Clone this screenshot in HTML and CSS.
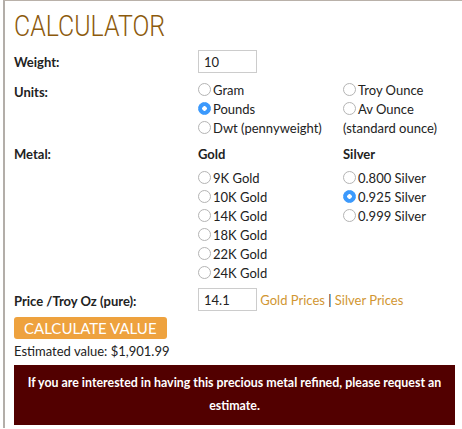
FILE: index.html
```html
<!DOCTYPE html>
<html lang="en">
<head>
    <meta charset="UTF-8">
    <title>Calculator</title>
    <link rel="stylesheet" href="styles.css">
</head>
<body>
    <div class="panel">
        <h1>CALCULATOR</h1>
        <form class="calc">
            <div class="label">Weight:</div>
            <div class="span2"><input type="text" class="num" value="10"></div>

            <div class="label">Units:</div>
            <div class="col">
                <label><input type="radio" name="unit">Gram</label>
                <label><input type="radio" name="unit" checked>Pounds</label>
                <label><input type="radio" name="unit">Dwt (pennyweight)</label>
            </div>
            <div class="col">
                <label><input type="radio" name="unit">Troy Ounce</label>
                <label><input type="radio" name="unit">Av Ounce</label>
                <span class="note">(standard ounce)</span>
            </div>

            <div class="label metal">Metal:</div>
            <div class="col metal">
                <div class="head">Gold</div>
                <label><input type="radio" name="metal">9K Gold</label>
                <label><input type="radio" name="metal">10K Gold</label>
                <label><input type="radio" name="metal">14K Gold</label>
                <label><input type="radio" name="metal">18K Gold</label>
                <label><input type="radio" name="metal">22K Gold</label>
                <label><input type="radio" name="metal">24K Gold</label>
            </div>
            <div class="col metal">
                <div class="head">Silver</div>
                <label><input type="radio" name="metal">0.800 Silver</label>
                <label><input type="radio" name="metal" checked>0.925 Silver</label>
                <label><input type="radio" name="metal">0.999 Silver</label>
            </div>

            <div class="label price">Price /Troy Oz (pure):</div>
            <div class="span2 price">
                <input type="text" class="num" value="14.1">
                <a href="#">Gold Prices</a> | <a href="#">Silver Prices</a>
            </div>
        </form>
        <button type="button" class="go">CALCULATE VALUE</button>
        <p class="result">Estimated value: $1,901.99</p>
        <div class="refine">If you are interested in having this precious metal refined, please request an estimate.</div>
    </div>
</body>
</html>
```

FILE: styles.css
```css
body {
    margin: 0;
    background: #fff;
    color: #222;
    font-family: 'Lato', sans-serif;
    font-size: 13px;
}
.panel {
    margin-left: 3px;
    border-top: 1px solid #b9b1a9;
    border-left: 2px solid #b3aea9;
    padding: 0 7px 3px 9px;
}
h1 {
    font-family: 'Roboto', sans-serif;
    font-weight: 300;
    font-size: 30px;
    color: #8c5a0c;
    margin: 0;
    padding-top: 9px;
    line-height: 32px;
    transform: scaleX(0.83);
    transform-origin: left center;
}
.calc {
    display: grid;
    grid-template-columns: 184px 145px 1fr;
    margin-top: 8px;
}
.label {
    font-weight: bold;
    padding-top: 4px;
}
.span2 {
    grid-column: span 2;
    margin-bottom: 7px;
}
.col {
    display: flex;
    flex-direction: column;
}
.col label, .note {
    display: flex;
    align-items: center;
    height: 19px;
}
input[type="radio"] {
    appearance: none;
    margin: 0 2px 0 0;
    width: 13px;
    height: 13px;
    border: 1px solid #b4b4b4;
    border-radius: 50%;
    background: #fff;
    flex: none;
}
input[type="radio"]:checked {
    border-color: #3b99fc;
    background: radial-gradient(circle, #fff 0 2px, #3b99fc 2.5px);
}
.metal {
    margin-top: 9px;
}
.label.metal {
    padding-top: 0;
}
.head {
    font-weight: bold;
    height: 22px;
}
.num {
    width: 47px;
    height: 15px;
    padding: 3px 5px;
    border: 1px solid #ccc;
    font-family: 'Lato', sans-serif;
    font-size: 13px;
    color: #222;
}
.price {
    margin-top: 6px;
    margin-bottom: 6px;
}
.label.price {
    padding-top: 5px;
}
a {
    color: #d19632;
    text-decoration: none;
}
.go {
    display: block;
    background: #eea23e;
    color: #fff;
    border: none;
    border-radius: 3px;
    font-family: 'Lato', sans-serif;
    font-size: 15px;
    padding: 0 10px;
    height: 22px;
    line-height: 22px;
}
.result {
    margin: 4px 0 6px;
}
.refine {
    background: #520000;
    color: #fff;
    font-weight: bold;
    font-size: 12.4px;
    text-align: center;
    line-height: 23px;
    padding: 6px 4px 8px;
}
```
